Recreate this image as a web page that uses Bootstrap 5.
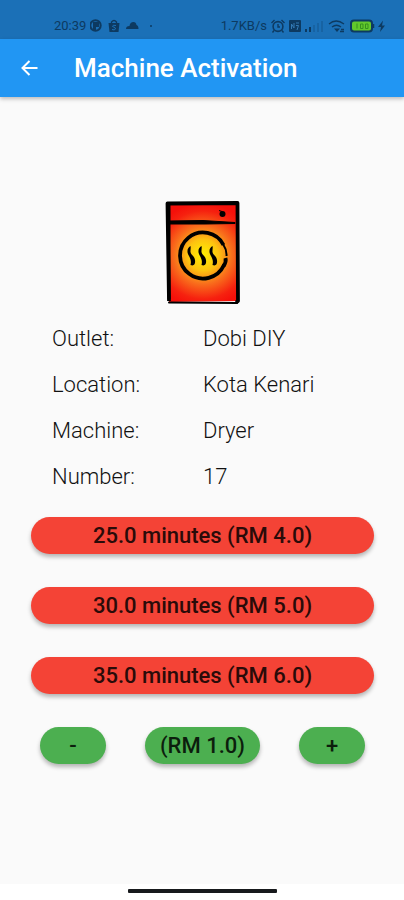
<!DOCTYPE html>
<html lang="en">
<head>
<meta charset="utf-8">
<meta name="viewport" content="width=device-width, initial-scale=1">
<title>Machine Activation</title>
<link href="https://cdn.jsdelivr.net/npm/bootstrap@5.3.0/dist/css/bootstrap.min.css" rel="stylesheet">
<style>
body { font-family: Roboto, "Liberation Sans", sans-serif; background: #fafafa; color: #111; }
.status-bar { background: #1b70b7; color: #0d3a61; font-size: 13px; line-height: 18px; padding: 17px 18px 4px 54px; }
.app-bar { background: #2196f3; height: 58px; padding: 0 20px; box-shadow: 0 2px 4px rgba(0,0,0,.25); gap: 35px; }
.app-bar h1 { font-size: 26px; line-height: 32px; font-weight: 500; }
.back-btn { line-height: 0; }
.screen-body { padding: 104px 30px 32px 31px; }
.details { font-size: 22px; line-height: 46px; margin: 11px 0 17px; padding: 0 21px; }
.details dt, .details dd { font-weight: 300; }
.details dt { width: 151px; }
.pill { border-radius: 19px; height: 37px; padding: 0 15px; font-size: 22px; line-height: 36px; box-shadow: 0 3px 4px rgba(0,0,0,.28); }
.pill-red, .pill-red:hover { background: #f44336; color: #2a0b09; }
.pill-green, .pill-green:hover { background: #4caf50; color: #0c1e0d; }
.pill, .pill:hover { font-weight: 500; }
.pill-step { width: 66px; }
.stack { gap: 33px; }
.step-row { padding: 0 9px; }
.nav-strip { background: #fff; padding: 5px 0 7px; }
.nav-handle { width: 149px; height: 4px; background: #17191c; border-radius: 1px; }
</style>
<script src="https://cdn.jsdelivr.net/npm/bootstrap@5.3.0/dist/js/bootstrap.bundle.min.js"></script>
</head>
<body>
<div class="d-flex flex-column min-vh-100">
  <div class="status-bar d-flex justify-content-between align-items-center">
    <div class="d-flex align-items-center">
      <span>20:39</span>
      <svg class="ms-1" width="66" height="14" viewBox="0 0 66 14" aria-hidden="true">
        <circle cx="5.500" cy="6.500" r="5.200" fill="none" stroke="#0d3a61" stroke-width="2"/>
        <path d="M3 3h6v5H6v3H3z" fill="#0d3a61"/>
        <path d="M18.500 4h11l-1 9h-9z" fill="#0d3a61"/>
        <path d="M21.500 5V3q2.500-3 5 0v2" fill="none" stroke="#0d3a61" stroke-width="1.300"/>
        <path d="M26 6.500q-3.500-1-3.500 1 3.500 1 3 2.500-1 1.500-3.500.500" fill="none" stroke="#1b70b7"/>
        <path d="M36 10q0-3 3.500-3 .5-4 4-4 2.500 0 3 3 2 .5 2 4z" fill="#0d3a61"/>
        <circle cx="61" cy="7" r="1" fill="#0d3a61"/>
      </svg>
    </div>
    <div class="d-flex align-items-center">
      <span>1.7KB/s</span>
      <svg class="ms-1" width="115" height="14" viewBox="0 0 115 14" aria-hidden="true">
        <g fill="none" stroke="#0d3a61">
          <circle cx="7" cy="7.500" r="4.900" stroke-width="1.600"/>
          <path d="M7 5v3h2M.5 4l3-3M10.500 1l3 3M3 11.500l-1.500 2M11 11.500l1.500 2" stroke-width="1.400"/>
        </g>
        <rect x="18" y="1" width="12" height="12" rx="1" fill="#0d3a61"/>
        <path d="M20.500 10V5l2.500 4V4M25 4h3M25 6.500h2.500l-1.500 4.500" fill="none" stroke="#3279b3"/>
        <path d="M34 10h2v3h-2zM38 8h2v5h-2z" fill="#0d3a61"/>
        <path d="M42 6h2v7h-2zM46 4h2v9h-2zM50 2h2v11h-2z" fill="#1763a3"/>
        <g fill="none" stroke="#0d3a61" stroke-width="1.300">
          <path d="M58 5q7-6 15 0M61 8q4.500-3.500 9 0"/>
          <path d="M63 9.500h6l-3 3.500z" fill="#0d3a61" stroke="none"/>
          <path d="M69 12.500h4M70 10.500h3"/>
        </g>
        <rect x="80" y="1.500" width="21" height="11" rx="3" fill="#62c82c" stroke="#0d3a61" stroke-width="2"/>
        <path d="M102.500 5v4" stroke="#0d3a61" stroke-width="1.500"/>
        <path d="M86 4.500v5M89.500 5h2.500v4.500h-2.500zM94.500 5h2.500v4.500h-2.500z" fill="none" stroke="#34901f"/>
        <path d="M112 1.500l-5 6.500h3l-1 5 5-6.500h-3z" fill="#0d3a61"/>
      </svg>
    </div>
  </div>

  <header class="app-bar d-flex align-items-center text-white">
    <button type="button" class="back-btn btn p-0 border-0 text-white" aria-label="Back">
      <svg width="19" height="18" viewBox="0 0 19 18" fill="none" stroke="currentColor" stroke-width="2" aria-hidden="true">
        <path d="M17.500 9H3M9.500 2L2.500 9l7 7"/>
      </svg>
    </button>
    <h1 class="m-0">Machine Activation</h1>
  </header>

  <main class="screen-body flex-grow-1">
    <svg class="d-block mx-auto" width="76" height="104" viewBox="0 0 76 104" role="img" aria-label="Dryer">
      <defs>
        <radialGradient id="heat" gradientUnits="userSpaceOnUse" cx="38" cy="54" r="52">
          <stop offset="0" stop-color="#fff200"/>
          <stop offset=".3" stop-color="#fdc310"/>
          <stop offset=".55" stop-color="#f9701c"/>
          <stop offset=".85" stop-color="#f6210f"/>
          <stop offset="1" stop-color="#f5100a"/>
        </radialGradient>
      </defs>
      <path d="M3 3h69v97L4 101z" fill="url(#heat)"/>
      <path d="M4 100L2.500 2.500 72.500 2l.5 98-2 1.500" fill="none" stroke="#000" stroke-width="3.800" stroke-linejoin="round"/>
      <path d="M4 101.500l68 .5" stroke="#000" stroke-width="2" stroke-linecap="round"/>
      <path d="M4 4v94" stroke="#000" stroke-width="3"/>
      <path d="M3 20l35-.5 32 2v1l-30 .5-37 0z" fill="#000" stroke="#000"/>
      <circle cx="57.500" cy="13" r="3" fill="#000"/>
      <path d="M57 10.500l-3-1" stroke="#000" stroke-width="1"/>
      <path d="M58.500 44A23 23 0 1 0 59 64" fill="none" stroke="#000" stroke-width="3.800"/>
      <path d="M58 43q4 6 3.500 12" fill="none" stroke="#000" stroke-width="2"/>
      <path d="M60.500 57q1 4-2 8" fill="none" stroke="#000" stroke-width="3.800"/>
      <g fill="#000">
        <path id="steam" d="M25.500 45c-3.500 2-4 6-1.500 10 1.500 3 2.500 5 1.500 9 4 1.500 5-1.500 4.500-5-.5-4-4-5-4.500-8-.2-2 .5-4 0-6z"/>
        <use href="#steam" x="11"/>
        <use href="#steam" x="22"/>
      </g>
    </svg>

    <dl class="details">
      <div class="d-flex"><dt>Outlet:</dt><dd class="m-0">Dobi DIY</dd></div>
      <div class="d-flex"><dt>Location:</dt><dd class="m-0">Kota Kenari</dd></div>
      <div class="d-flex"><dt>Machine:</dt><dd class="m-0">Dryer</dd></div>
      <div class="d-flex"><dt>Number:</dt><dd class="m-0">17</dd></div>
    </dl>

    <div class="stack d-flex flex-column">
      <button type="button" class="btn border-0 pill pill-red">25.0 minutes (RM 4.0)</button>
      <button type="button" class="btn border-0 pill pill-red">30.0 minutes (RM 5.0)</button>
      <button type="button" class="btn border-0 pill pill-red">35.0 minutes (RM 6.0)</button>
      <div class="step-row d-flex justify-content-between">
        <button type="button" class="btn border-0 pill pill-green pill-step" aria-label="Decrease">-</button>
        <button type="button" class="btn border-0 pill pill-green">(RM 1.0)</button>
        <button type="button" class="btn border-0 pill pill-green pill-step" aria-label="Increase">+</button>
      </div>
    </div>
  </main>

  <div class="nav-strip"><div class="nav-handle mx-auto"></div></div>
</div>
</body>
</html>
